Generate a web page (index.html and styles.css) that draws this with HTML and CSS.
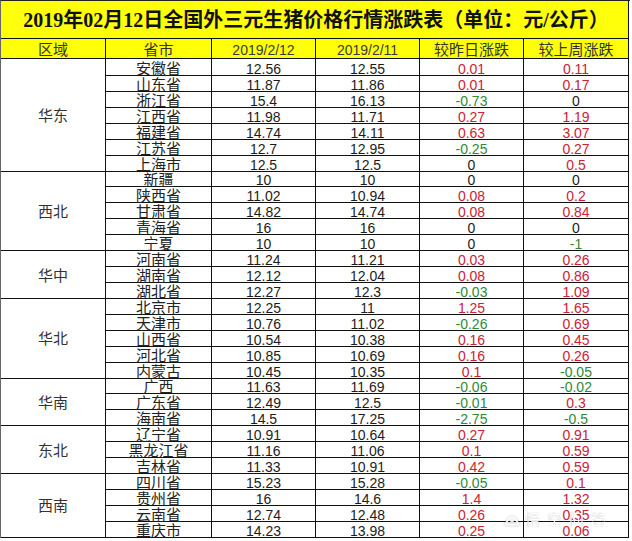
FILE: index.html
```html
<!DOCTYPE html>
<html lang="zh-CN">
<head>
<meta charset="utf-8">
<title>2019年02月12日全国外三元生猪价格行情涨跌表</title>
<link rel="stylesheet" href="styles.css">
</head>
<body>
<div class="page">
  <div class="sheet">
    <div class="c title"><span class="tt">2019年02月12日全国外三元生猪价格行情涨跌表（单位：元/公斤）</span></div>
    <div class="c head zh">区域</div>
    <div class="c head zh">省市</div>
    <div class="c head">2019/2/12</div>
    <div class="c head">2019/2/11</div>
    <div class="c head zh">较昨日涨跌</div>
    <div class="c head zh">较上周涨跌</div>

    <div class="c region s7">华东</div>
    <div class="c zh">安徽省</div><div class="c">12.56</div><div class="c">12.55</div><div class="c up">0.01</div><div class="c up">0.11</div>
    <div class="c zh">山东省</div><div class="c">11.87</div><div class="c">11.86</div><div class="c up">0.01</div><div class="c up">0.17</div>
    <div class="c zh">浙江省</div><div class="c">15.4</div><div class="c">16.13</div><div class="c down">-0.73</div><div class="c">0</div>
    <div class="c zh">江西省</div><div class="c">11.98</div><div class="c">11.71</div><div class="c up">0.27</div><div class="c up">1.19</div>
    <div class="c zh">福建省</div><div class="c">14.74</div><div class="c">14.11</div><div class="c up">0.63</div><div class="c up">3.07</div>
    <div class="c zh">江苏省</div><div class="c">12.7</div><div class="c">12.95</div><div class="c down">-0.25</div><div class="c up">0.27</div>
    <div class="c zh">上海市</div><div class="c">12.5</div><div class="c">12.5</div><div class="c">0</div><div class="c up">0.5</div>

    <div class="c region s5">西北</div>
    <div class="c zh">新疆</div><div class="c">10</div><div class="c">10</div><div class="c">0</div><div class="c">0</div>
    <div class="c zh">陕西省</div><div class="c">11.02</div><div class="c">10.94</div><div class="c up">0.08</div><div class="c up">0.2</div>
    <div class="c zh">甘肃省</div><div class="c">14.82</div><div class="c">14.74</div><div class="c up">0.08</div><div class="c up">0.84</div>
    <div class="c zh">青海省</div><div class="c">16</div><div class="c">16</div><div class="c">0</div><div class="c">0</div>
    <div class="c zh">宁夏</div><div class="c">10</div><div class="c">10</div><div class="c">0</div><div class="c down">-1</div>

    <div class="c region s3">华中</div>
    <div class="c zh">河南省</div><div class="c">11.24</div><div class="c">11.21</div><div class="c up">0.03</div><div class="c up">0.26</div>
    <div class="c zh">湖南省</div><div class="c">12.12</div><div class="c">12.04</div><div class="c up">0.08</div><div class="c up">0.86</div>
    <div class="c zh">湖北省</div><div class="c">12.27</div><div class="c">12.3</div><div class="c down">-0.03</div><div class="c up">1.09</div>

    <div class="c region s5">华北</div>
    <div class="c zh">北京市</div><div class="c">12.25</div><div class="c">11</div><div class="c up">1.25</div><div class="c up">1.65</div>
    <div class="c zh">天津市</div><div class="c">10.76</div><div class="c">11.02</div><div class="c down">-0.26</div><div class="c up">0.69</div>
    <div class="c zh">山西省</div><div class="c">10.54</div><div class="c">10.38</div><div class="c up">0.16</div><div class="c up">0.45</div>
    <div class="c zh">河北省</div><div class="c">10.85</div><div class="c">10.69</div><div class="c up">0.16</div><div class="c up">0.26</div>
    <div class="c zh">内蒙古</div><div class="c">10.45</div><div class="c">10.35</div><div class="c up">0.1</div><div class="c down">-0.05</div>

    <div class="c region s3">华南</div>
    <div class="c zh">广西</div><div class="c">11.63</div><div class="c">11.69</div><div class="c down">-0.06</div><div class="c down">-0.02</div>
    <div class="c zh">广东省</div><div class="c">12.49</div><div class="c">12.5</div><div class="c down">-0.01</div><div class="c up">0.3</div>
    <div class="c zh">海南省</div><div class="c">14.5</div><div class="c">17.25</div><div class="c down">-2.75</div><div class="c down">-0.5</div>

    <div class="c region s3">东北</div>
    <div class="c zh">辽宁省</div><div class="c">10.91</div><div class="c">10.64</div><div class="c up">0.27</div><div class="c up">0.91</div>
    <div class="c zh">黑龙江省</div><div class="c">11.16</div><div class="c">11.06</div><div class="c up">0.1</div><div class="c up">0.59</div>
    <div class="c zh">吉林省</div><div class="c">11.33</div><div class="c">10.91</div><div class="c up">0.42</div><div class="c up">0.59</div>

    <div class="c region s4">西南</div>
    <div class="c zh">四川省</div><div class="c">15.23</div><div class="c">15.28</div><div class="c down">-0.05</div><div class="c up">0.1</div>
    <div class="c zh">贵州省</div><div class="c">16</div><div class="c">14.6</div><div class="c up">1.4</div><div class="c up">1.32</div>
    <div class="c zh">云南省</div><div class="c">12.74</div><div class="c">12.48</div><div class="c up">0.26</div><div class="c up">0.35</div>
    <div class="c zh">重庆市</div><div class="c">14.23</div><div class="c">13.98</div><div class="c up">0.25</div><div class="c up">0.06</div>
  </div>
  <div class="mark">
    <svg class="mark-logo" width="16" height="14" viewBox="0 0 16 14"><path d="M1.5 12.5 Q8 -2 14.5 12.5 Z" fill="none" stroke="#fff" stroke-width="2"/><circle cx="8" cy="8.5" r="2" fill="#fff"/></svg>
    <span class="mark-text">悟空问答</span>
  </div>
</div>
</body>
</html>
```

FILE: styles.css
```css
html, body {
  margin: 0;
  padding: 0;
  background: #ffffff;
}

.page {
  position: relative;
  width: 632px;
  height: 541px;
  overflow: hidden;
}

.sheet {
  display: grid;
  grid-template-columns: 105px 106px 104px 104px 104px 105px;
  grid-template-rows: 38px 20px 17px repeat(29, 15.93px);
  width: 629px;
  border-top: 1px solid #222;
  border-left: 1px solid #666;
  font-family: "Liberation Sans", Arial, sans-serif;
  font-size: 14px;
  color: #1c1c1c;
}

.c {
  box-sizing: border-box;
  border-right: 1px solid #111;
  border-bottom: 1px solid #111;
  display: flex;
  justify-content: center;
  align-items: flex-end;
  line-height: 12px;
  white-space: nowrap;
  overflow: visible;
}

.zh {
  font-family: "Noto Sans CJK SC", sans-serif;
  font-size: 15px;
  line-height: 14px;
  color: #222;
}

.title {
  grid-column: 1 / span 6;
  background: #ffff0a;
  align-items: center;
  font-family: "Liberation Serif", "Noto Sans CJK SC", serif;
  font-weight: bold;
  font-size: 20px;
  line-height: 24px;
  color: #111;
}

.tt {
  padding-left: 3px;
}

.head {
  background: #ffff0a;
  align-items: center;
  line-height: 14px;
  padding-top: 2px;
  color: #3a3a3a;
}

.head.zh {
  color: #333;
  line-height: 16px;
  padding-top: 0;
}

.region {
  grid-column: 1;
  align-items: center;
  font-family: "Noto Sans CJK SC", sans-serif;
  font-size: 15px;
  line-height: 18px;
  color: #333;
}

.s7 { grid-row: span 7; }
.s5 { grid-row: span 5; }
.s4 { grid-row: span 4; }
.s3 { grid-row: span 3; }

.up {
  color: #cc2233;
}

.down {
  color: #2e8a35;
}

.mark {
  position: absolute;
  left: 504px;
  top: 511px;
  display: flex;
  align-items: center;
  gap: 5px;
  opacity: 0.85;
}

.mark-logo {
  filter: drop-shadow(0 0 1px rgba(0, 0, 0, 0.35));
}

.mark-text {
  font-family: "Noto Sans CJK SC", sans-serif;
  font-size: 15px;
  line-height: 15px;
  letter-spacing: 7px;
  color: #ffffff;
  text-shadow: 0 0 1px rgba(0, 0, 0, 0.45);
}
```
